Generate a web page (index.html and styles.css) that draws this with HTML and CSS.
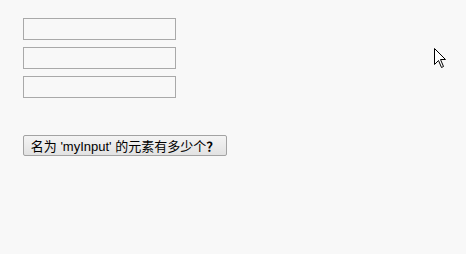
FILE: index.html
```html
<!DOCTYPE html>
<html lang="zh-CN">
<head>
    <meta charset="UTF-8">
    <title>myInput</title>
    <link rel="stylesheet" href="styles.css">
</head>
<body>
    <div class="fields">
        <input type="text" name="myInput">
        <input type="text" name="myInput">
        <input type="text" name="myInput">
    </div>
    <button class="count-btn" type="button">名为 'myInput' 的元素有多少个<b>？</b></button>

    <!-- 鼠标指针 -->
    <svg class="cursor" width="13" height="21" viewBox="0 0 13 21">
        <path d="M0.5 0.5 L0.5 16.5 L4.5 12.5 L7.5 19.5 L9.5 18.5 L6.5 11.5 L11.5 11.5 Z" fill="#fff" stroke="#000" stroke-width="1"/>
    </svg>
</body>
</html>
```

FILE: styles.css
```css
body {
    margin: 0;
    padding: 18px 23px;
    background: #f8f8f8;
    font-family: "Liberation Sans", "Noto Sans CJK SC", sans-serif;
    font-size: 13px;
}
.fields input {
    display: block;
    box-sizing: border-box;
    width: 153px;
    height: 22px;
    margin: 0 0 7px 0;
    padding: 1px 2px;
    border: 1px solid #a9a9a9;
    background: #f8f8f8;
}
.count-btn {
    display: block;
    box-sizing: border-box;
    margin-top: 37px;
    width: 204px;
    height: 21px;
    padding: 0 4px;
    border: 1px solid #a3a3a3;
    border-radius: 2px;
    background: linear-gradient(#f4f4f4, #e2e2e2);
    font-family: "Liberation Sans", "Noto Sans CJK SC", sans-serif;
    font-size: 13px;
    color: #000;
    white-space: nowrap;
}
.count-btn b {
    font-family: "Noto Sans CJK SC", sans-serif;
    font-weight: bold;
}
.cursor {
    position: absolute;
    left: 434px;
    top: 48px;
}
```
